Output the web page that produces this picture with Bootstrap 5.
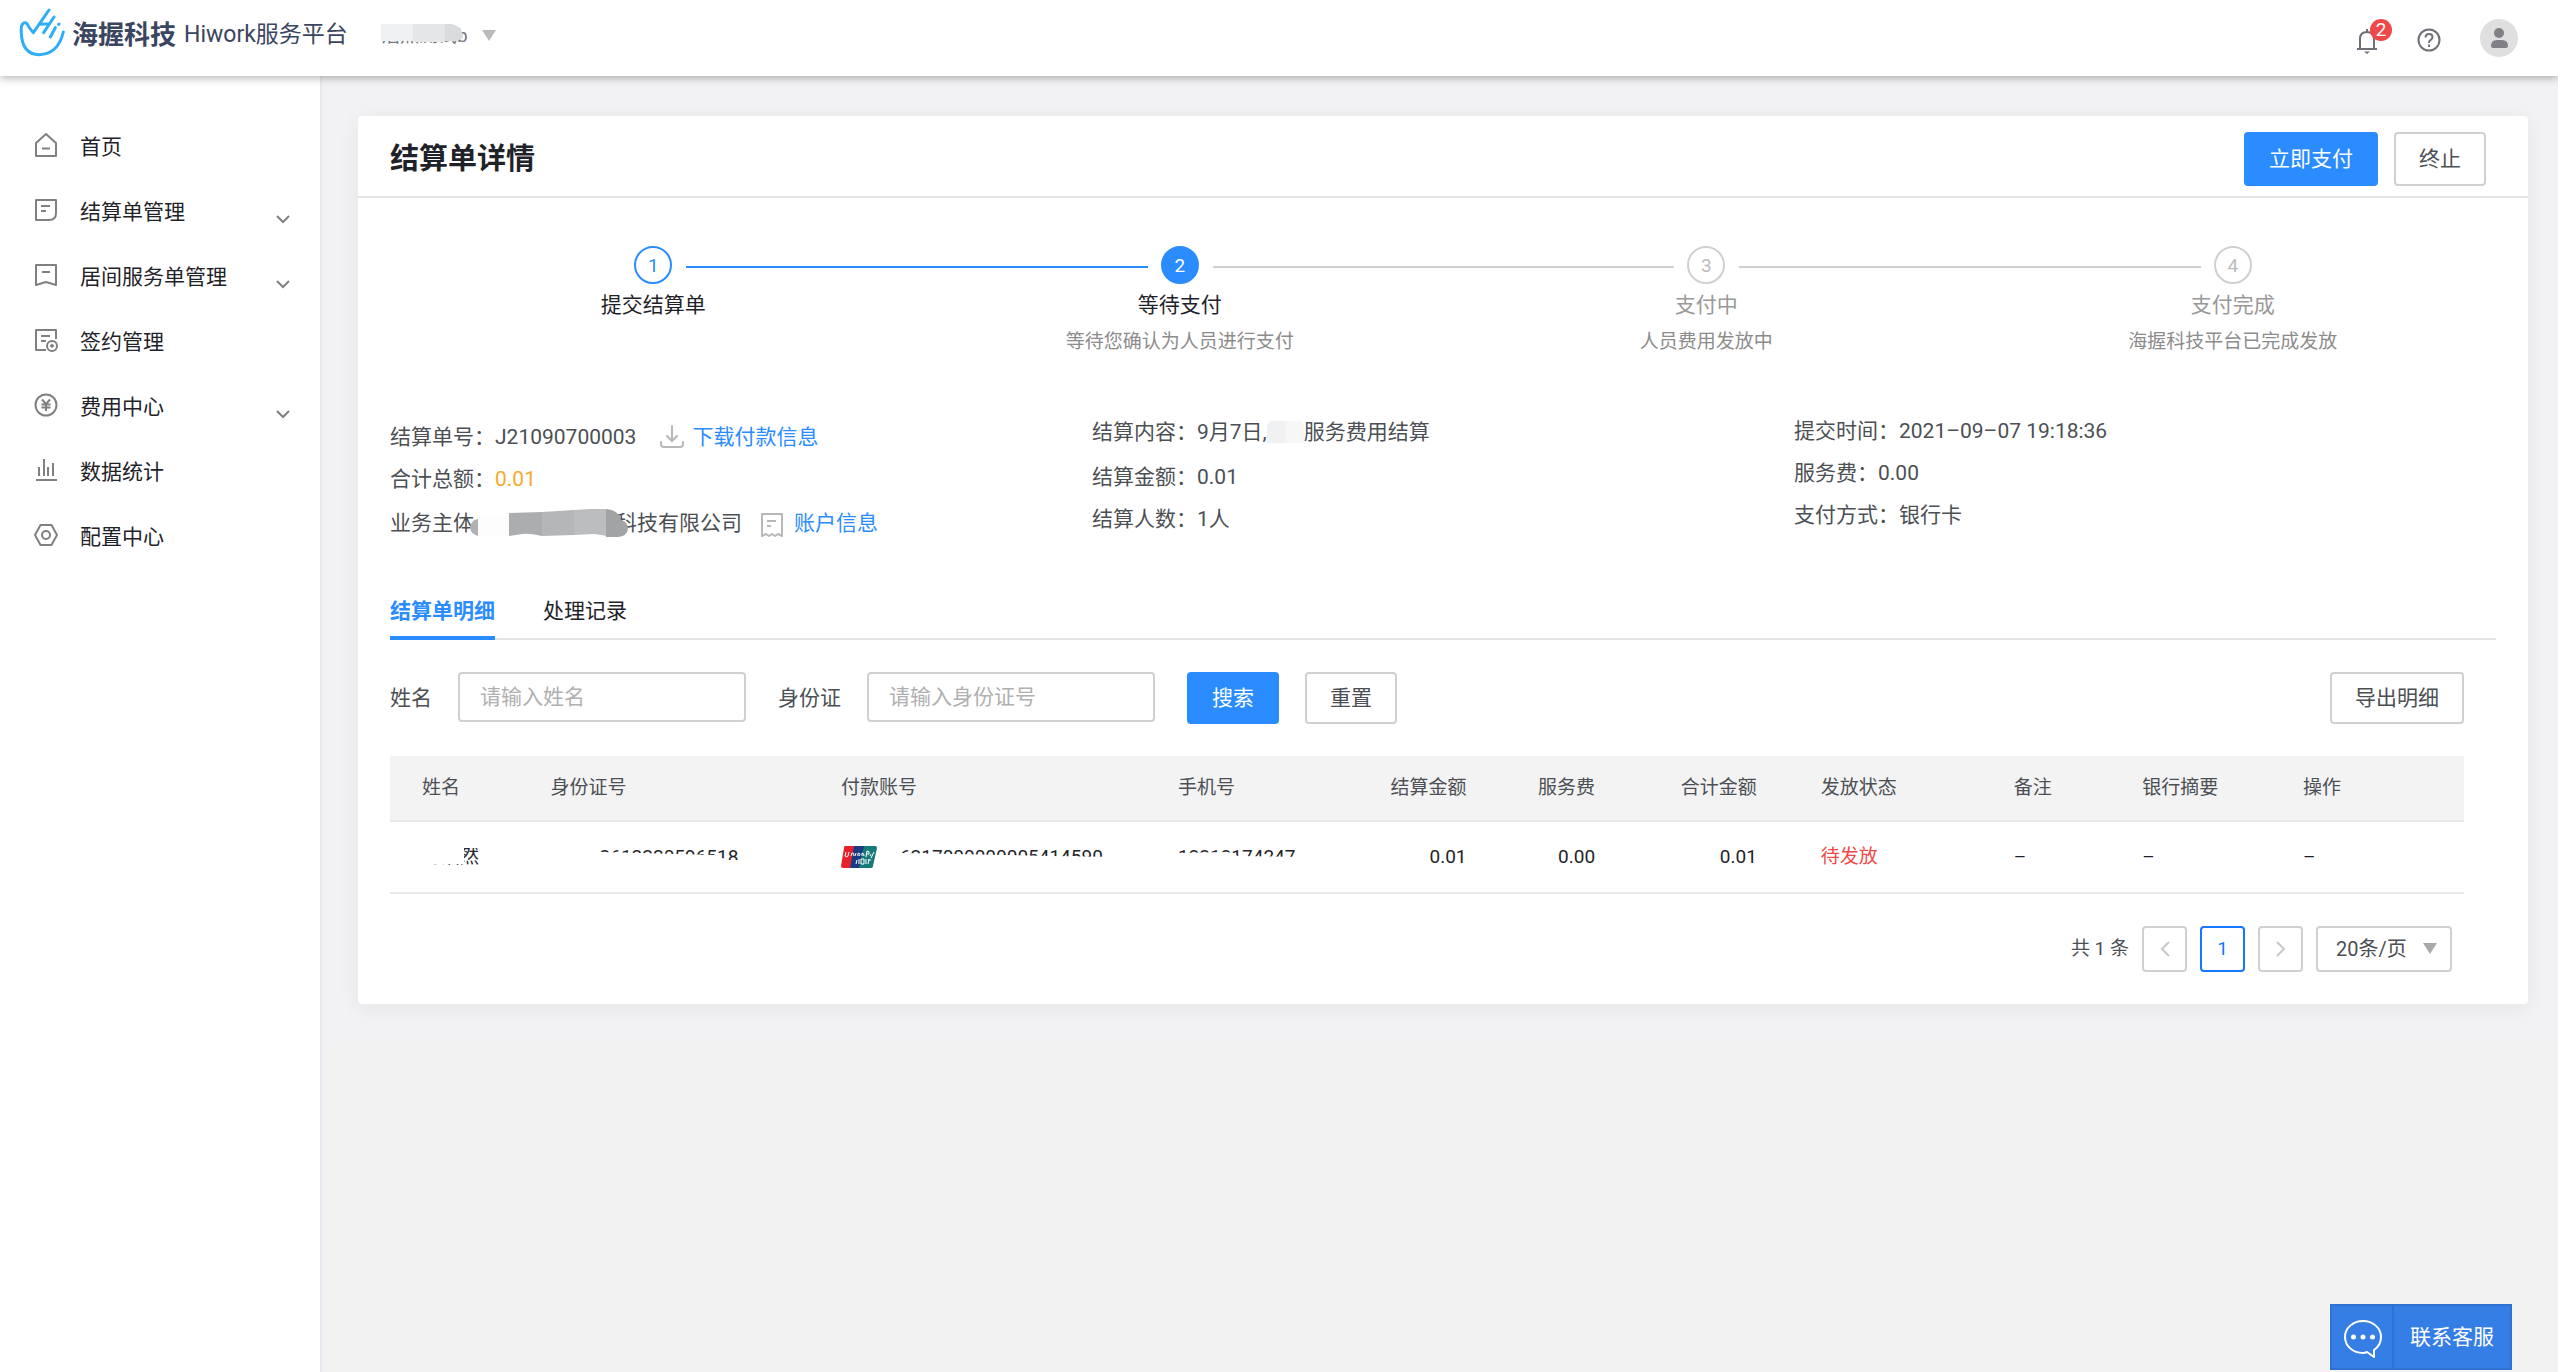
<!DOCTYPE html>
<html lang="zh-CN">
<head>
<meta charset="utf-8">
<meta name="viewport" content="width=device-width, initial-scale=1">
<title>结算单详情</title>
<link href="https://cdn.jsdelivr.net/npm/bootstrap@5.3.0/dist/css/bootstrap.min.css" rel="stylesheet">
<style>
:root{--blue:#2b8cff;--line:#d0d0d0;--soft:#e4e4e4;--ink:#1f2329;--text:#4c4f54;--muted:#999}
body{font-family:Roboto,"Noto Sans CJK SC",sans-serif;font-size:21px;line-height:42px;color:var(--text);background:#f2f2f2;min-height:100vh}
a{text-decoration:none}
svg{display:block;flex:none}
.topbar{height:76px;background:#fff;box-shadow:0 2px 8px rgba(0,0,0,.3);padding:0 40px 0 19px;z-index:3;position:relative}
.logo-link{padding-top:8px}
.brand-cn{font-size:26px;font-weight:700;color:#3a4560;line-height:54px;margin:0 8px 0 6px}
.brand-app{font-size:23px;font-weight:400;color:#3a4560;line-height:54px}
.org{position:relative;width:120px;height:24px;margin:22px 0 0 33px;line-height:28px;font-size:19px;color:#666;text-align:left;white-space:nowrap}
.org svg{position:absolute;left:0;top:0}
.tools{gap:39px}
.plain-btn{padding:0;border:0;background:none;color:#77777d}
.bell{position:relative;margin-top:6px}
.bell-count{position:absolute;left:14px;top:-9px;width:22px;height:22px;line-height:22px;border-radius:11px;background:#ee4848;color:#fff;font-size:19px;text-align:center}
.side{width:322px;flex:none;background:#fff;border-right:2px solid #e4e8ef;padding:38px 30px 0 34px}
.side .nav-link{height:65px;padding:0;color:var(--ink);gap:22px}
.side .mi{margin-bottom:4px}
.side .chev{margin:16px 0 0 auto}
.main-area{padding:40px 30px 40px 36px;background:#f2f2f4;align-self:flex-start;min-width:0}
.panel{background:#fff;border-radius:4px;box-shadow:0 4px 24px rgba(0,0,0,.06)}
.panel-head{height:82px;border-bottom:2px solid var(--soft);padding:6px 42px 0 32px}
.panel-head h1{font-size:29px;font-weight:700;color:var(--ink);margin:0}
.btn{--bs-btn-font-size:21px;--bs-btn-padding-y:0;--bs-btn-padding-x:23px;--bs-btn-border-width:2px;--bs-btn-border-radius:4px;line-height:46px;height:52px}
.btn-primary{--bs-btn-bg:#2b8cff;--bs-btn-border-color:#2b8cff}
.btn-line{--bs-btn-color:#4c4f54;--bs-btn-border-color:#d0d0d0;--bs-btn-bg:#fff;--bs-btn-hover-border-color:#2b8cff;--bs-btn-disabled-border-color:#d0d0d0;--bs-btn-disabled-bg:#fff;--bs-btn-disabled-opacity:1}
.panel-head .btn{height:54px;line-height:48px}
.panel-body{padding:48px 32px 32px}
.flow-steps{list-style:none;margin:0;padding:0;height:164px}
.flow-steps li{flex:1 1 0;position:relative;text-align:center;color:var(--muted)}
.flow-steps li:not(:last-child)::after{content:"";position:absolute;height:2px;top:20px;left:calc(50% + 33px);right:calc(-50% + 32px);background:var(--line)}
.flow-steps .dot{width:38px;height:38px;line-height:35px;border:2px solid var(--line);border-radius:50%;margin:0 auto 4px;color:#bbb;font-size:19px}
.flow-steps .ttl{line-height:34px}
.flow-steps .dsc{font-size:19px;line-height:40px;color:#8c8c8c}
.flow-steps .done .dot{border-color:var(--blue);color:var(--blue)}
.flow-steps li.done:not(:last-child)::after{background:var(--blue)}
.flow-steps .now .dot{border-color:var(--blue);background:var(--blue);color:#fff}
.flow-steps .done .ttl,.flow-steps .now .ttl{color:var(--ink)}
.lnk{color:var(--blue)}
.info{height:172px}
.info .first-col{padding-top:6px}
.info .tall{line-height:46px}
.info .lead-row{line-height:44px;padding-bottom:2px}
.amt{color:#f8a92c}
.over{position:relative;z-index:1}
.blob-a{margin:0 -12px 0 -4px}
.slip{margin:4px 10px 0 18px}
.tabs{border-bottom:2px solid var(--soft);gap:48px;height:58px}
.tabs .nav-link{padding:0;border:0;background:none;height:58px;line-height:58px;color:var(--ink)}
.tabs .nav-link.active{color:var(--blue);font-weight:700;box-shadow:inset 0 -4px var(--blue)}
.inset-r{margin:32px 32px 0 0}
.filters{column-gap:26px}
.filters label{line-height:52px}
.filters .apart{margin-left:6px}
.form-control{width:288px;height:50px;border:2px solid var(--line);border-radius:4px;font-size:21px;line-height:44px;padding:0 20px}
.form-control::placeholder{color:#b0b0b0;opacity:1}
.table{--bs-table-color:var(--ink);width:100%;table-layout:fixed;border-collapse:separate;border-spacing:0;margin:0;font-size:19px;line-height:28px}
.table>:not(caption)>*>*{padding:0 32px;border-bottom:2px solid #e8e8e8;white-space:nowrap;vertical-align:middle}
.table>thead>tr>th{height:66px;background:#f3f3f3;font-weight:400;color:var(--text)}
.table>tbody>tr>td{height:72px}
.table>tbody>tr>td.state{color:#f04848}
.cut-name{clip-path:polygon(0 21px,42px 21px,42px 5px,58px 5px,58px 23px,0 23px)}
.cut-id{margin-left:49px;clip-path:polygon(0 0,150px 0,150px 17px,128px 17px,115px 12px,40px 10px,0 9px)}
.cut-card{margin-left:23px;clip-path:polygon(0 0,220px 0,220px 14px,150px 13px,0 10px)}
.cut-tel{clip-path:polygon(0 0,130px 0,130px 14px,60px 13px,50px 9px,0 10px)}
.pager{margin:32px 44px 0 0;font-size:19px;gap:13px}
.pager .btn{height:46px;line-height:40px;width:45px;--bs-btn-padding-x:0;--bs-btn-font-size:19px}
.pager .cur{--bs-btn-color:#1677ff;--bs-btn-border-color:#1677ff;--bs-btn-bg:#fff}
.form-select{width:136px;height:46px;border:2px solid var(--line);border-radius:4px;font-size:20px;line-height:40px;padding:0 18px;color:var(--text);background-image:none}
.pick{position:relative}
.pick svg{position:absolute;right:15px;top:17px;pointer-events:none}
.service{position:fixed;right:46px;bottom:2px;height:66px;background:#357ee6;border:2px solid #2f72d2;color:#fff;padding:0}
.service .ico{height:62px;border-right:2px solid #2f72d2;padding:14px 10px 0 12px}
.service .lbl{padding:0 16px;line-height:62px}
</style>
<script src="https://cdn.jsdelivr.net/npm/bootstrap@5.3.0/dist/js/bootstrap.bundle.min.js"></script>
</head>
<body class="d-flex flex-column">
<header class="topbar d-flex align-items-start">
  <a class="logo-link d-flex align-items-start" href="#">
    <svg width="47" height="49" viewBox="28 23 141 147" fill="none" stroke="#30aef5" stroke-width="9" stroke-linecap="round" stroke-linejoin="round"><path d="M161 95Q145 162 88 163Q38 162 35 100Q34 84 36 76Q42 62 52 70Q60 86 71 97L118 29M133 50L102 97M90 72L120 70M137 82L122 110M147 72L148 71"/></svg>
    <span class="brand-cn">海握科技</span><span class="brand-app">Hiwork服务平台</span>
  </a>
  <button class="plain-btn org" type="button" aria-label="切换企业">浩然测试b
    <svg width="120" height="24" viewBox="0 0 120 24"><path d="M0 2H32V19H0Z" fill="#f0f1f3"/><path d="M32 2H64V20H32Z" fill="#e5e6e8"/><path d="M64 2H70Q82 4 82 16L76 19H64Z" fill="#dadbdd"/><path d="M101 8H115L108 19Z" fill="#bbb"/></svg>
  </button>
  <div class="tools d-flex align-items-center ms-auto h-100">
    <button class="plain-btn bell" type="button" aria-label="消息">
      <svg width="22" height="26" viewBox="0 0 22 26" fill="none" stroke="#707078" stroke-width="2"><path d="M1 21H21M4 21V11Q4 4 11 4Q18 4 18 11V21M11 1V4"/><path d="M8 23.500H14L11 26Z" fill="#707078" stroke="none"/></svg>
      <span class="bell-count">2</span>
    </button>
    <button class="plain-btn mt-1" type="button" aria-label="帮助">
      <svg width="24" height="26" viewBox="0 0 24 26" fill="none" stroke="#707078" stroke-width="2"><circle cx="12" cy="13" r="10.500"/><path d="M8.500 10.500Q8.500 7 12 7Q15.500 7 15.500 10Q15.500 12 13.500 13Q12 14 12 16M12 17.500V20"/></svg>
    </button>
    <button class="plain-btn" type="button" aria-label="账户">
      <svg width="38" height="38" viewBox="0 0 38 38"><circle cx="19" cy="19" r="19" fill="#dfdfe0"/><circle cx="19" cy="14" r="5" fill="#808086"/><path d="M11 27Q11 21 17 21H22Q28 21 28 27Q28 29 26 29H13Q11 29 11 27Z" fill="#808086"/></svg>
    </button>
  </div>
</header>

<div class="d-flex flex-grow-1">
  <aside class="side">
    <nav class="nav flex-column" aria-label="主菜单">
      <a class="nav-link d-flex align-items-center" href="#"><svg class="mi" width="24" height="24" viewBox="0 0 24 24" fill="none" stroke="#808080" stroke-width="2" stroke-linejoin="round"><path d="M2 10L12 1L22 10V23H2ZM8 15.500H16"/></svg>首页</a>
      <a class="nav-link d-flex align-items-center" href="#"><svg class="mi" width="24" height="24" viewBox="0 0 24 24" fill="none" stroke="#808080" stroke-width="2" stroke-linejoin="round"><path d="M2 2H22V15Q22 22 15 22H2ZM7 8H16M7 13H12"/></svg>结算单管理<svg class="chev" width="14" height="9" viewBox="0 0 14 9" fill="none" stroke="#808080" stroke-width="2"><path d="M1 1L7 7L13 1"/></svg></a>
      <a class="nav-link d-flex align-items-center" href="#"><svg class="mi" width="24" height="24" viewBox="0 0 24 24" fill="none" stroke="#808080" stroke-width="2" stroke-linejoin="round"><path d="M2 2H22V22L12 19L2 22ZM8 9H16"/></svg>居间服务单管理<svg class="chev" width="14" height="9" viewBox="0 0 14 9" fill="none" stroke="#808080" stroke-width="2"><path d="M1 1L7 7L13 1"/></svg></a>
      <a class="nav-link d-flex align-items-center" href="#"><svg class="mi" width="24" height="24" viewBox="0 0 24 24" fill="none" stroke="#808080" stroke-width="2" stroke-linejoin="round"><path d="M22 11V2H2V22H12M7 8H16M7 13H12"/><circle cx="18" cy="18" r="5"/><path d="M18 15.500L20.500 18L18 20L15.500 18Z" fill="#808080" stroke="none"/></svg>签约管理</a>
      <a class="nav-link d-flex align-items-center" href="#"><svg class="mi" width="24" height="24" viewBox="0 0 24 24" fill="none" stroke="#808080" stroke-width="2"><circle cx="12" cy="12" r="10.500"/><path d="M8 6.500L12 11L16 6.500M12 11V18M7.500 11.500H16.500M7.500 14.500H16.500"/></svg>费用中心<svg class="chev" width="14" height="9" viewBox="0 0 14 9" fill="none" stroke="#808080" stroke-width="2"><path d="M1 1L7 7L13 1"/></svg></a>
      <a class="nav-link d-flex align-items-center" href="#"><svg class="mi" width="24" height="24" viewBox="0 0 24 24" fill="none" stroke="#808080" stroke-width="2"><path d="M2 22H23M5 18V9M10 18V1M14 18V9M19 18V5"/></svg>数据统计</a>
      <a class="nav-link d-flex align-items-center" href="#"><svg class="mi" width="24" height="24" viewBox="0 0 24 24" fill="none" stroke="#808080" stroke-width="2" stroke-linejoin="round"><path d="M1 12L6.500 2H17.500L23 12L17.500 22H6.500Z"/><circle cx="12" cy="12" r="4"/></svg>配置中心</a>
    </nav>
  </aside>

  <main class="main-area flex-grow-1">
    <section class="panel">
      <div class="panel-head d-flex align-items-center">
        <h1>结算单详情</h1>
        <div class="d-flex gap-3 ms-auto">
          <button class="btn btn-primary" type="button">立即支付</button>
          <button class="btn btn-line" type="button">终止</button>
        </div>
      </div>
      <div class="panel-body">
        <ol class="flow-steps d-flex">
          <li class="done"><div class="dot">1</div><div class="ttl">提交结算单</div></li>
          <li class="now"><div class="dot">2</div><div class="ttl">等待支付</div><div class="dsc">等待您确认为人员进行支付</div></li>
          <li><div class="dot">3</div><div class="ttl">支付中</div><div class="dsc">人员费用发放中</div></li>
          <li><div class="dot">4</div><div class="ttl">支付完成</div><div class="dsc">海握科技平台已完成发放</div></li>
        </ol>

        <div class="info row g-0">
          <div class="col-4 first-col">
            <div class="d-flex align-items-center">结算单号：J21090700003
              <svg class="ms-4 me-2" width="24" height="24" viewBox="0 0 24 24" fill="none" stroke="#b8b8b8" stroke-width="2" stroke-linecap="round"><path d="M12 1V16M7 11L12 16L17 11M1 17V19Q1 22 4 22H20Q23 22 23 19V17"/></svg>
              <a class="lnk" href="#">下载付款信息</a></div>
            <div>合计总额：<span class="amt">0.01</span></div>
            <div class="tall d-flex align-items-center">业务主体<svg class="blob-a over" width="158" height="28" viewBox="0 0 158 28"><path d="M8 10Q0 12 0 19Q1 25 8 27Z" fill="#b0b1b2"/><path d="M8 9L40 3V27H8Z" fill="#fdfdfd"/><path d="M39 4L72 3V27Q58 24 52 25L39 27Z" fill="#acadae"/><path d="M72 3L104 1V26L72 27Z" fill="#b5b6b8"/><path d="M104 1L120 0H137V27L124 25L104 26Z" fill="#bcbdbf"/><path d="M136 0Q149 1 151 11Q158 13 158 20Q157 27 148 28H136Z" fill="#a2a3a5"/></svg>科技有限公司
              <svg class="slip" width="24" height="26" viewBox="0 0 24 26" fill="none" stroke="#b8b8b8" stroke-width="2" stroke-linejoin="round"><path d="M2 2H22V24L18 22L15 24L12 22L9 24L6 22L2 24ZM7 9H16M7 14H11"/></svg>
              <a class="lnk" href="#">账户信息</a></div>
          </div>
          <div class="col-4">
            <div class="lead-row d-flex align-items-center">结算内容：9月7日,<svg class="over" width="37" height="22" viewBox="0 0 37 22"><path d="M3 0H18V22H0V5Z" fill="#f0f1f2"/><path d="M18 0H33L37 5V22H18Z" fill="#f7f7f8"/></svg>服务费用结算</div>
            <div>结算金额：0.01</div>
            <div>结算人数：1人</div>
          </div>
          <div class="col-4">
            <div>提交时间：2021–09–07 19:18:36</div>
            <div>服务费：0.00</div>
            <div>支付方式：银行卡</div>
          </div>
        </div>

        <div class="tabs nav" role="tablist">
          <button class="nav-link active" type="button" role="tab" aria-selected="true">结算单明细</button>
          <button class="nav-link" type="button" role="tab" aria-selected="false">处理记录</button>
        </div>

        <form class="filters inset-r d-flex align-items-start">
          <label for="fName">姓名</label>
          <input class="form-control" id="fName" type="text" placeholder="请输入姓名">
          <label class="apart" for="fId">身份证</label>
          <input class="form-control" id="fId" type="text" placeholder="请输入身份证号">
          <button class="btn btn-primary apart" type="button">搜索</button>
          <button class="btn btn-line" type="reset">重置</button>
          <button class="btn btn-line ms-auto" type="button">导出明细</button>
        </form>

        <div class="inset-r">
          <table class="table">
            <colgroup><col style="width:6.2%"><col style="width:14%"><col style="width:16.25%"><col style="width:9.3%"><col style="width:7.7%"><col style="width:6.2%"><col style="width:7.8%"><col style="width:9.3%"><col style="width:6.2%"><col style="width:7.75%"><col style="width:9.3%"></colgroup>
            <thead><tr><th>姓名</th><th>身份证号</th><th>付款账号</th><th>手机号</th><th class="text-end">结算金额</th><th class="text-end">服务费</th><th class="text-end">合计金额</th><th>发放状态</th><th>备注</th><th>银行摘要</th><th>操作</th></tr></thead>
            <tbody><tr>
              <td><div class="cut-name">海浩然</div></td>
              <td><div class="cut-id">2612220596518</div></td>
              <td><div class="d-flex align-items-center"><svg width="36" height="22" viewBox="0 0 36 22"><path d="M4 0H16L12 22H2Q0 22 0 20L3 2Q3 0 4 0Z" fill="#e9202c"/><path d="M13 0H25L20 22H9Z" fill="#1b3a86"/><path d="M23 0H34Q36 0 36 2L32 20Q32 22 30 22H18Z" fill="#157a78"/><path d="M5 6L4 10Q6 12 7 10L8 6M10 10L11 7Q13 6 13 10M15 7L14 10M17 10Q16 7 18 7Q20 8 18 10M21 10V7Q23 7 23 10M25 11L26 5Q29 5 28 8H26M30 8L29 10M33 6L30 12M16 14L15 18M18 13V18M20 13H23V18H20ZM25 13V18M27 14H30M28 13L27 18" fill="none" stroke="#fff" stroke-width="1"/></svg><div class="cut-card">6217000000005414590</div></div></td>
              <td><div class="cut-tel">13213174247</div></td>
              <td class="text-end">0.01</td><td class="text-end">0.00</td><td class="text-end">0.01</td>
              <td class="state">待发放</td><td>–</td><td>–</td><td>–</td>
            </tr></tbody>
          </table>
        </div>

        <nav class="pager d-flex justify-content-end align-items-center" aria-label="分页">
          <span>共 1 条</span>
          <button class="btn btn-line d-flex align-items-center justify-content-center" type="button" disabled aria-label="上一页"><svg width="10" height="16" viewBox="0 0 10 16" fill="none" stroke="#c8c8c8" stroke-width="2"><path d="M9 1L2 8L9 15"/></svg></button>
          <button class="btn cur" type="button" aria-current="page">1</button>
          <button class="btn btn-line d-flex align-items-center justify-content-center" type="button" disabled aria-label="下一页"><svg width="10" height="16" viewBox="0 0 10 16" fill="none" stroke="#c8c8c8" stroke-width="2"><path d="M1 1L8 8L1 15"/></svg></button>
          <div class="pick"><select class="form-select" aria-label="每页条数"><option>20条/页</option><option>50条/页</option></select><svg width="14" height="11" viewBox="0 0 14 11"><path d="M0 0H14L7 11Z" fill="#aaa"/></svg></div>
        </nav>
      </div>
    </section>
  </main>
</div>

<button class="service d-flex" type="button"><span class="ico"><svg width="38" height="38" viewBox="0 0 38 38" fill="none" stroke="#fff" stroke-width="2" stroke-linejoin="round"><path d="M23 32Q21 33 19 33C9 33 1 26 1 17C1 8 9 1 19 1C29 1 37 8 37 17Q37 25 30 30V37Z"/><g fill="#fff" stroke="none"><circle cx="9.500" cy="17" r="2.500"/><circle cx="19" cy="17" r="2.500"/><circle cx="28.500" cy="17" r="2.500"/></g></svg></span><span class="lbl">联系客服</span></button>
</body>
</html>
